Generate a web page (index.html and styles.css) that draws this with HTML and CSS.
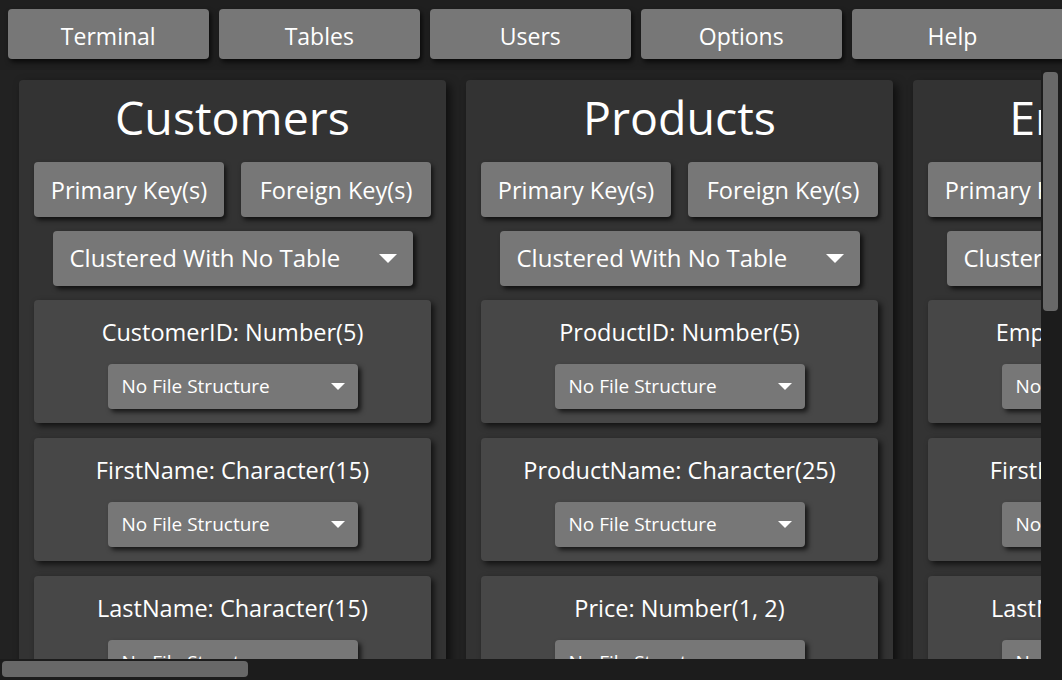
FILE: index.html
```html
<!DOCTYPE html>
<html>
<head>
<meta charset="utf-8">
<link rel="stylesheet" href="styles.css">
</head>
<body>
<nav class="topbar">
  <button class="nav-btn">Terminal</button>
  <button class="nav-btn">Tables</button>
  <button class="nav-btn">Users</button>
  <button class="nav-btn">Options</button>
  <button class="nav-btn nav-last">Help</button>
</nav>
<div class="main">
  <div class="viewport">
    <section class="panel">
      <h1 class="panel-title">Customers</h1>
      <div class="keys">
        <button class="btn">Primary Key(s)</button>
        <button class="btn">Foreign Key(s)</button>
      </div>
      <div class="select big"><span>Clustered With No Table</span><i class="caret big-caret"></i></div>
      <div class="card">
        <div class="card-title">CustomerID: Number(5)</div>
        <div class="select small"><span>No File Structure</span><i class="caret"></i></div>
      </div>
      <div class="card">
        <div class="card-title">FirstName: Character(15)</div>
        <div class="select small"><span>No File Structure</span><i class="caret"></i></div>
      </div>
      <div class="card">
        <div class="card-title">LastName: Character(15)</div>
        <div class="select small"><span>No File Structure</span><i class="caret"></i></div>
      </div>
    </section>
    <section class="panel">
      <h1 class="panel-title">Products</h1>
      <div class="keys">
        <button class="btn">Primary Key(s)</button>
        <button class="btn">Foreign Key(s)</button>
      </div>
      <div class="select big"><span>Clustered With No Table</span><i class="caret big-caret"></i></div>
      <div class="card">
        <div class="card-title">ProductID: Number(5)</div>
        <div class="select small"><span>No File Structure</span><i class="caret"></i></div>
      </div>
      <div class="card">
        <div class="card-title">ProductName: Character(25)</div>
        <div class="select small"><span>No File Structure</span><i class="caret"></i></div>
      </div>
      <div class="card">
        <div class="card-title">Price: Number(1, 2)</div>
        <div class="select small"><span>No File Structure</span><i class="caret"></i></div>
      </div>
    </section>
    <section class="panel">
      <h1 class="panel-title">Employees</h1>
      <div class="keys">
        <button class="btn">Primary Key(s)</button>
        <button class="btn">Foreign Key(s)</button>
      </div>
      <div class="select big"><span>Clustered With No Table</span><i class="caret big-caret"></i></div>
      <div class="card">
        <div class="card-title">EmployeeID: Number(5)</div>
        <div class="select small"><span>No File Structure</span><i class="caret"></i></div>
      </div>
      <div class="card">
        <div class="card-title">FirstName: Character(15)</div>
        <div class="select small"><span>No File Structure</span><i class="caret"></i></div>
      </div>
      <div class="card">
        <div class="card-title">LastName: Character(15)</div>
        <div class="select small"><span>No File Structure</span><i class="caret"></i></div>
      </div>
    </section>
  </div>
  <div class="vtrack"><div class="vthumb"></div></div>
  <div class="htrack"><div class="hthumb"></div></div>
  <div class="corner"></div>
</div>
</body>
</html>
```

FILE: styles.css
```css
* { box-sizing: border-box; }
html, body {
  margin: 0;
  padding: 0;
  width: 1062px;
  height: 680px;
  overflow: hidden;
  background: #1f1f1f;
  font-family: "Open Sans", "Noto Sans", sans-serif;
  color: #fff;
}
button {
  font-family: inherit;
  color: #fff;
  border: none;
  cursor: pointer;
}
.topbar {
  display: flex;
  gap: 10.5px;
  padding: 9px 0 0 8px;
  height: 70px;
}
.nav-btn {
  flex: 0 0 200.5px;
  height: 50px;
  background: #777;
  border-radius: 4px;
  font-size: 23px;
  box-shadow: 2px 3px 5px rgba(0,0,0,0.7);
  padding: 3px 0 0 0;
}
.nav-btn.nav-last {
  flex: 0 0 214px;
  padding-right: 13px;
  border-radius: 4px 0 0 4px;
}
.main {
  display: grid;
  grid-template-columns: 1fr 21px;
  grid-template-rows: 589px 21px;
  height: 610px;
}
.viewport {
  overflow: hidden;
  display: flex;
  gap: 20px;
  padding: 10px 0 0 19px;
  background: #222;
}
.panel {
  flex: 0 0 427px;
  width: 427px;
  background: #333;
  border-radius: 4px;
  padding: 0 15px 0 15px;
  box-shadow: 4px 4px 10px rgba(0,0,0,0.6);
  height: 700px;
}
.panel-title {
  margin: 0;
  height: 82px;
  font-size: 46.5px;
  font-weight: 400;
  text-align: center;
  line-height: 74px;
}
.keys {
  display: flex;
  gap: 17px;
}
.btn {
  flex: 1 0 0;
  height: 55px;
  background: #777;
  border-radius: 4px;
  font-size: 23.5px;
  box-shadow: 2px 3px 5px rgba(0,0,0,0.7);
  padding: 0;
}
.select {
  display: flex;
  align-items: center;
  justify-content: space-between;
  background: #777;
  border-radius: 4px;
  box-shadow: 3px 3px 5px rgba(0,0,0,0.7);
}
.select.big {
  width: 360px;
  height: 55px;
  margin: 14px auto 14px;
  padding: 0 16px 0 17px;
  font-size: 24px;
}
.select.small {
  width: 250px;
  height: 45px;
  margin: 0 auto;
  padding: 0 13px 0 14px;
  font-size: 19px;
}
.select span {
  position: relative;
  top: -1px;
}
.caret {
  width: 0;
  height: 0;
  border-left: 7px solid transparent;
  border-right: 7px solid transparent;
  border-top: 7px solid #fff;
}
.caret.big-caret {
  border-left-width: 9px;
  border-right-width: 9px;
  border-top-width: 9px;
}
.card {
  background: #474747;
  border-radius: 4px;
  height: 123px;
  margin-bottom: 15px;
  padding-top: 14px;
  box-shadow: 3px 3px 6px rgba(0,0,0,0.7);
}
.card-title {
  text-align: center;
  font-size: 23.5px;
  height: 50px;
  line-height: 37px;
}
.vtrack {
  background: #1c1c1c;
  padding: 2px 4px 0 2px;
}
.vthumb {
  height: 239px;
  background: #686868;
  border-radius: 4px;
}
.htrack {
  background: #1c1c1c;
  padding: 2px 0 0 2px;
}
.hthumb {
  width: 246px;
  height: 16px;
  background: #686868;
  border-radius: 4px;
}
.corner {
  background: #1c1c1c;
}
```
